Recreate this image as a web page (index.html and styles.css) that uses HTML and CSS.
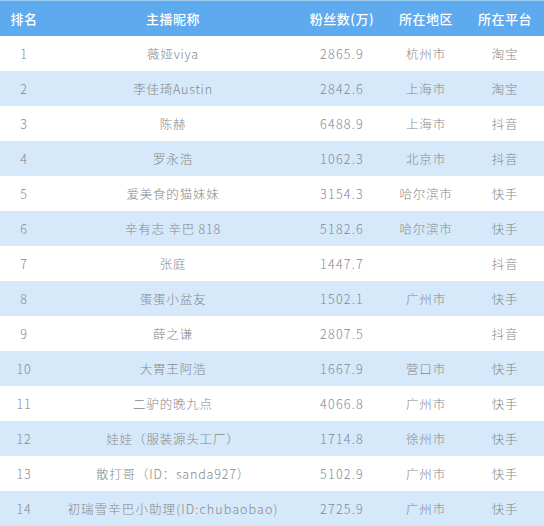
FILE: index.html
```html
<!DOCTYPE html>
<html lang="zh-CN">
<head>
<meta charset="utf-8">
<title>主播排名</title>
<link rel="stylesheet" href="styles.css">
</head>
<body>
<table class="rank">
  <colgroup>
    <col class="c-rank"><col class="c-name"><col class="c-fans"><col class="c-area"><col class="c-plat">
  </colgroup>
  <thead>
    <tr><th>排名</th><th>主播昵称</th><th>粉丝数(万)</th><th>所在地区</th><th>所在平台</th></tr>
  </thead>
  <tbody>
    <tr><td>1</td><td>薇娅viya</td><td class="num">2865.9</td><td>杭州市</td><td>淘宝</td></tr>
    <tr><td>2</td><td>李佳琦Austin</td><td class="num">2842.6</td><td>上海市</td><td>淘宝</td></tr>
    <tr><td>3</td><td>陈赫</td><td class="num">6488.9</td><td>上海市</td><td>抖音</td></tr>
    <tr><td>4</td><td>罗永浩</td><td class="num">1062.3</td><td>北京市</td><td>抖音</td></tr>
    <tr><td>5</td><td>爱美食的猫妹妹</td><td class="num">3154.3</td><td>哈尔滨市</td><td>快手</td></tr>
    <tr><td>6</td><td>辛有志 辛巴 818</td><td class="num">5182.6</td><td>哈尔滨市</td><td>快手</td></tr>
    <tr><td>7</td><td>张庭</td><td class="num">1447.7</td><td></td><td>抖音</td></tr>
    <tr><td>8</td><td>蛋蛋小盆友</td><td class="num">1502.1</td><td>广州市</td><td>快手</td></tr>
    <tr><td>9</td><td>薛之谦</td><td class="num">2807.5</td><td></td><td>抖音</td></tr>
    <tr><td>10</td><td>大胃王阿浩</td><td class="num">1667.9</td><td>营口市</td><td>快手</td></tr>
    <tr><td>11</td><td>二驴的晚九点</td><td class="num">4066.8</td><td>广州市</td><td>快手</td></tr>
    <tr><td>12</td><td>娃娃（服装源头工厂）</td><td class="num">1714.8</td><td>徐州市</td><td>快手</td></tr>
    <tr><td>13</td><td>散打哥（ID：sanda927）</td><td class="num">5102.9</td><td>广州市</td><td>快手</td></tr>
    <tr><td>14</td><td class="wide">初瑞雪辛巴小助理(ID:chubaobao)</td><td class="num">2725.9</td><td>广州市</td><td>快手</td></tr>
  </tbody>
</table>
</body>
</html>
```
FILE: styles.css
```css
html, body {
  margin: 0;
  padding: 0;
  background: #ffffff;
}
.rank {
  width: 544px;
  border-collapse: collapse;
  table-layout: fixed;
  font-family: "Noto Sans CJK SC", "Noto Sans", sans-serif;
}
.c-rank { width: 48px; }
.c-name { width: 250px; }
.c-fans { width: 88px; }
.c-area { width: 80px; }
.c-plat { width: 78px; }
.rank th {
  height: 35px;
  padding: 0;
  background: #5eaaef;
  border-top: 1px solid #9ccbf4;
  color: #ffffff;
  font-size: 13px;
  font-weight: 500;
  letter-spacing: 0.5px;
  text-align: center;
}
.rank td {
  height: 35px;
  padding: 0;
  color: #888888;
  font-size: 12.5px;
  font-weight: 300;
  letter-spacing: 0.8px;
  text-align: center;
  white-space: nowrap;
}
.rank tbody tr:nth-child(even) td {
  background: #d5e9fb;
}
.rank td.num {
  color: #7d8894;
  letter-spacing: 1.2px;
}
.rank td.wide {
  letter-spacing: 1.1px;
}
```
